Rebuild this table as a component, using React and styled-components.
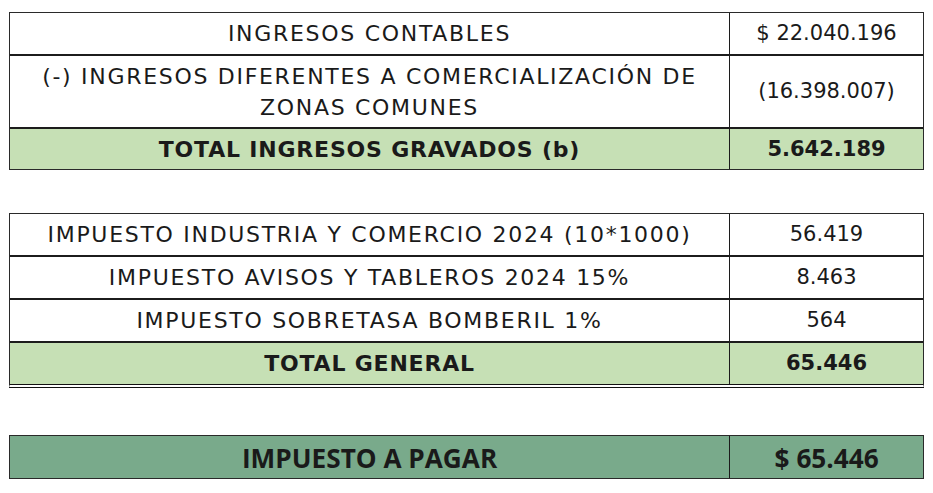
import React from 'react';
import styled, { createGlobalStyle } from 'styled-components';

const GlobalStyle = createGlobalStyle`
  body {
    margin: 0;
    background: #fff;
    font-family: 'DejaVu Sans', 'Open Sans', sans-serif;
    color: #1a1a1a;
  }
  * { box-sizing: border-box; }
`;

const Page = styled.div`
  width: 933px;
  height: 493px;
  padding: 12px 9px 0 9px;
  display: flex;
  flex-direction: column;
`;

const Table = styled.div`
  width: 915px;
  border: 1px solid #2a2a2a;
  border-bottom: ${({ double }) => (double ? '4px double #111' : '1px solid #2a2a2a')};
  margin-bottom: ${({ gap }) => gap || 0}px;
`;

const Row = styled.div`
  display: grid;
  grid-template-columns: 719px 1fr;
  height: ${({ h }) => h || 41}px;
  background: ${({ tone }) => (tone === 'light' ? '#c6e0b5' : tone === 'dark' ? '#79aa8b' : '#fff')};
  & + & {
    border-top: 2px solid #1c1c1c;
  }
`;

const Cell = styled.div`
  display: flex;
  align-items: center;
  justify-content: center;
  text-align: center;
  font-size: ${({ num }) => (num ? 21 : 22)}px;
  letter-spacing: ${({ bold, num }) => (num ? '0px' : bold ? '0.8px' : '1.7px')};
  line-height: 31px;
  font-weight: ${({ bold }) => (bold ? 700 : 400)};
  padding: 0 ${({ num }) => (num ? 4 : 14)}px;
  & + & {
    border-left: 1px solid #1c1c1c;
  }
`;

const Condensed = styled.span`
  display: inline-block;
  font-family: 'Open Sans', sans-serif;
  font-size: 27px;
  font-weight: 700;
  letter-spacing: 0px;
  transform: scaleX(0.97);
`;

export default function App() {
  return (
    <Page>
      <GlobalStyle />
      <Table gap={43}>
        <Row>
          <Cell>INGRESOS CONTABLES</Cell>
          <Cell num>$ 22.040.196</Cell>
        </Row>
        <Row h={73}>
          <Cell>(-) INGRESOS DIFERENTES A COMERCIALIZACIÓN DE ZONAS COMUNES</Cell>
          <Cell num>(16.398.007)</Cell>
        </Row>
        <Row tone="light" h={42}>
          <Cell bold>TOTAL INGRESOS GRAVADOS (b)</Cell>
          <Cell bold num>5.642.189</Cell>
        </Row>
      </Table>

      <Table double gap={47}>
        <Row>
          <Cell>IMPUESTO INDUSTRIA Y COMERCIO 2024 (10*1000)</Cell>
          <Cell num>56.419</Cell>
        </Row>
        <Row h={43}>
          <Cell>IMPUESTO AVISOS Y TABLEROS 2024 15%</Cell>
          <Cell num>8.463</Cell>
        </Row>
        <Row h={43}>
          <Cell>IMPUESTO SOBRETASA BOMBERIL 1%</Cell>
          <Cell num>564</Cell>
        </Row>
        <Row h={43} tone="light">
          <Cell bold>TOTAL GENERAL</Cell>
          <Cell bold num>65.446</Cell>
        </Row>
      </Table>

      <Table>
        <Row h={42} tone="dark">
          <Cell><Condensed>IMPUESTO A PAGAR</Condensed></Cell>
          <Cell num><Condensed>$ 65.446</Condensed></Cell>
        </Row>
      </Table>
    </Page>
  );
}
